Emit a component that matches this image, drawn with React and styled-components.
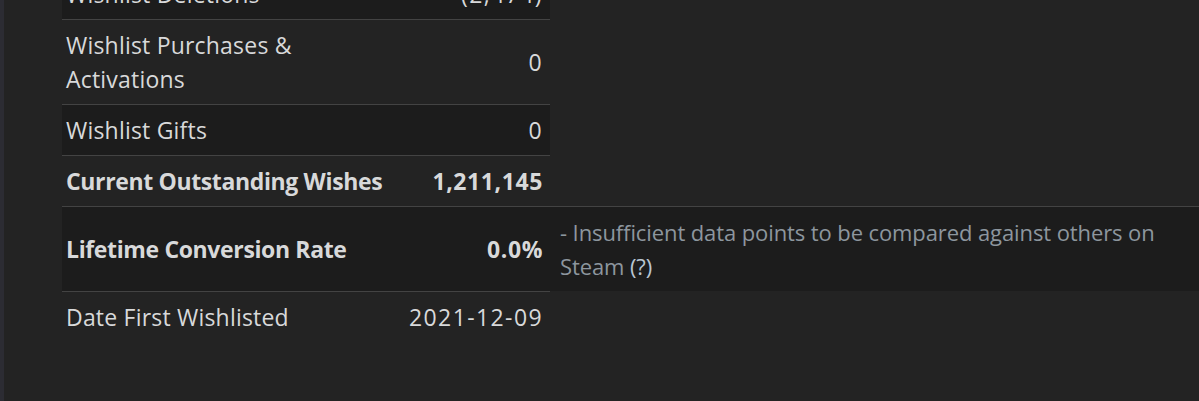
import React from "react";
import styled, { createGlobalStyle } from "styled-components";

const Global = createGlobalStyle`
  html, body { margin: 0; padding: 0; background: #232323; }
  body { font-family: "Open Sans", "Noto Sans", sans-serif; overflow: hidden; }
`;

const Page = styled.div`
  display: flex;
  height: 401px;
  background: #232323;
  overflow: hidden;
`;

const SideStrip = styled.div`
  width: 4px;
  flex: none;
  background: #2c2c33;
`;

const Content = styled.div`
  flex: 1;
  padding-left: 58px;
`;

const Table = styled.div`
  display: flex;
  flex-direction: column;
  margin-top: -32px;
`;

const Row = styled.div`
  display: flex;
  align-items: stretch;
`;

const Main = styled.div`
  width: 488px;
  flex: none;
  display: grid;
  grid-template-columns: 336px 1fr;
  align-items: center;
  background: ${(p) => (p.$dark ? "#1c1c1c" : "transparent")};
  border-top: 1px solid ${(p) => (p.$noBorder ? "transparent" : "#434343")};
  padding: 8px 0;
  font-size: 23px;
  line-height: 34px;
  color: #d8d9da;
  font-weight: ${(p) => (p.$bold ? 700 : 400)};
`;

const Label = styled.div`
  padding-left: 4px;
  letter-spacing: ${(p) => (p.$bold ? "-0.36px" : "0.2px")};
`;

const Value = styled.div`
  text-align: right;
  padding-right: ${(p) => (p.$bold ? "7px" : "7px")};
  white-space: nowrap;
  letter-spacing: ${(p) => (p.$bold ? "0.6px" : "1.4px")};
`;

const Note = styled.div`
  flex: 1;
  background: #1c1c1c;
  border-top: 1px solid #434343;
  padding: 8px 20px 8px 10px;
  font-size: 22px;
  line-height: 34px;
  letter-spacing: -0.1px;
  color: #8d969e;
  display: flex;
  align-items: center;
`;

const Help = styled.span`
  color: #b9c6d2;
`;

const rows = [
  { label: "Wishlist Deletions", value: "(2,474)", dark: true },
  { label: "Wishlist Purchases & Activations", value: "0" },
  { label: "Wishlist Gifts", value: "0", dark: true },
  { label: "Current Outstanding Wishes", value: "1,211,145", bold: true },
  {
    label: "Lifetime Conversion Rate",
    value: "0.0%",
    bold: true,
    dark: true,
    note: true,
  },
  { label: "Date First Wishlisted", value: "2021-12-09" },
];

export default function App() {
  return (
    <>
      <Global />
      <Page>
        <SideStrip />
        <Content>
          <Table>
            {rows.map((r, i) => (
              <Row key={r.label}>
                <Main $dark={r.dark} $bold={r.bold} $noBorder={i === 0}>
                  <Label $bold={r.bold}>{r.label}</Label>
                  <Value $bold={r.bold}>{r.value}</Value>
                </Main>
                {r.note && (
                  <Note>
                    <span>
                      - Insufficient data points to be compared against others on Steam{" "}
                      <Help>(?)</Help>
                    </span>
                  </Note>
                )}
              </Row>
            ))}
          </Table>
        </Content>
      </Page>
    </>
  );
}
